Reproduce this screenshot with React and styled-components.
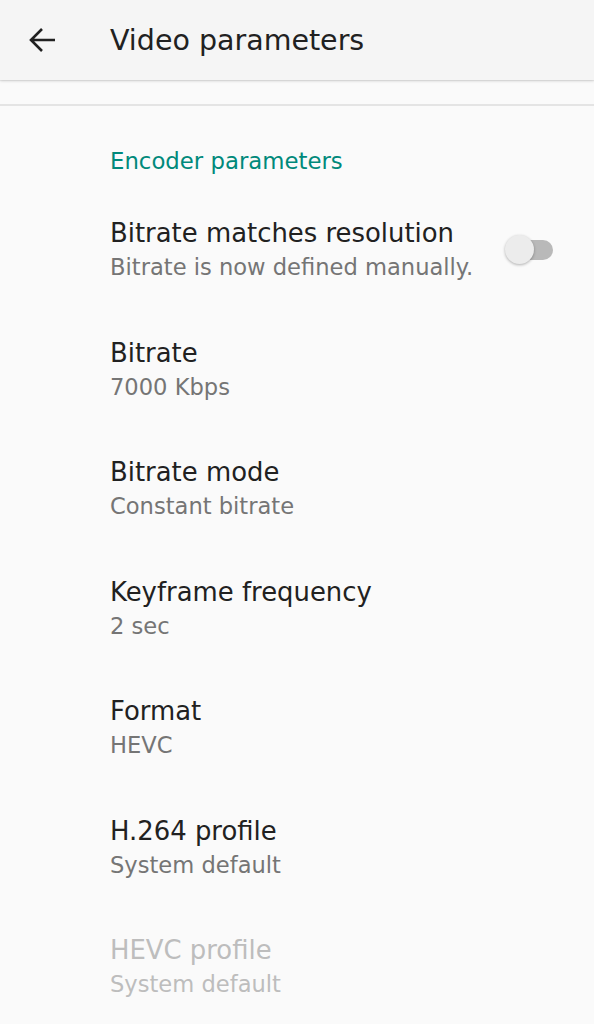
import styled, { createGlobalStyle } from "styled-components";

const GlobalStyle = createGlobalStyle`
  html, body {
    margin: 0;
    padding: 0;
    background: #fafafa;
    font-family: "DejaVu Sans", Roboto, sans-serif;
  }
`;

const Page = styled.div`
  width: 594px;
  min-height: 1024px;
  background: #fafafa;
  overflow: hidden;
`;

const AppBar = styled.header`
  height: 80px;
  display: flex;
  align-items: center;
  background: #f5f5f5;
  box-shadow: 0 1px 3px rgba(0, 0, 0, 0.14), 0 1px 1px rgba(0, 0, 0, 0.06);
  position: relative;
  z-index: 1;
`;

const BackButton = styled.button`
  width: 110px;
  height: 80px;
  padding: 0 0 0 28px;
  border: none;
  background: transparent;
  display: flex;
  align-items: center;
  color: #212121;
`;

const Title = styled.h1`
  margin: 0;
  font-size: 28.5px;
  font-weight: 400;
  color: #212121;
`;

const Spacer = styled.div`
  height: 24px;
  border-bottom: 2px solid #e4e4e4;
`;

const Category = styled.div`
  padding: 40px 0 12px 110px;
  font-size: 22.8px;
  line-height: 30px;
  color: #00897b;
`;

const Row = styled.div`
  display: flex;
  align-items: center;
  padding: 27px 40px 23.5px 110px;
`;

const Texts = styled.div`
  flex: 1;
  display: flex;
  flex-direction: column;
`;

const RowTitle = styled.div`
  font-size: 25.9px;
  line-height: 36px;
  color: ${(p) => (p.$disabled ? "#bdbdbd" : "#212121")};
`;

const Summary = styled.div`
  font-size: 22.6px;
  line-height: 33px;
  color: ${(p) => (p.$disabled ? "#bdbdbd" : "#757575")};
`;

const Switch = styled.div`
  position: relative;
  width: 50px;
  height: 29px;
`;

const Track = styled.div`
  position: absolute;
  left: 8px;
  right: 1px;
  top: 4.5px;
  height: 20px;
  border-radius: 10px;
  background: #b9b9b9;
`;

const Thumb = styled.div`
  position: absolute;
  left: 1px;
  top: 0;
  width: 29px;
  height: 29px;
  border-radius: 50%;
  background: #ececec;
  box-shadow: 0 1px 3px rgba(0, 0, 0, 0.3);
`;

function ArrowBack() {
  return (
    <svg width="28" height="28" viewBox="0 0 28 28" fill="none">
      <path
        d="M27 14H3M14 3L3 14l11 11"
        stroke="currentColor"
        strokeWidth="2.6"
        strokeLinejoin="miter"
      />
    </svg>
  );
}

const settings = [
  { title: "Bitrate", summary: "7000 Kbps" },
  { title: "Bitrate mode", summary: "Constant bitrate" },
  { title: "Keyframe frequency", summary: "2 sec" },
  { title: "Format", summary: "HEVC" },
  { title: "H.264 profile", summary: "System default" },
  { title: "HEVC profile", summary: "System default", disabled: true },
];

export default function App() {
  return (
    <Page>
      <GlobalStyle />
      <AppBar>
        <BackButton aria-label="Back">
          <ArrowBack />
        </BackButton>
        <Title>Video parameters</Title>
      </AppBar>
      <Spacer />
      <Category>Encoder parameters</Category>
      <Row>
        <Texts>
          <RowTitle>Bitrate matches resolution</RowTitle>
          <Summary>Bitrate is now defined manually.</Summary>
        </Texts>
        <Switch>
          <Track />
          <Thumb />
        </Switch>
      </Row>
      {settings.map((s) => (
        <Row key={s.title}>
          <Texts>
            <RowTitle $disabled={s.disabled}>{s.title}</RowTitle>
            <Summary $disabled={s.disabled}>{s.summary}</Summary>
          </Texts>
        </Row>
      ))}
    </Page>
  );
}
